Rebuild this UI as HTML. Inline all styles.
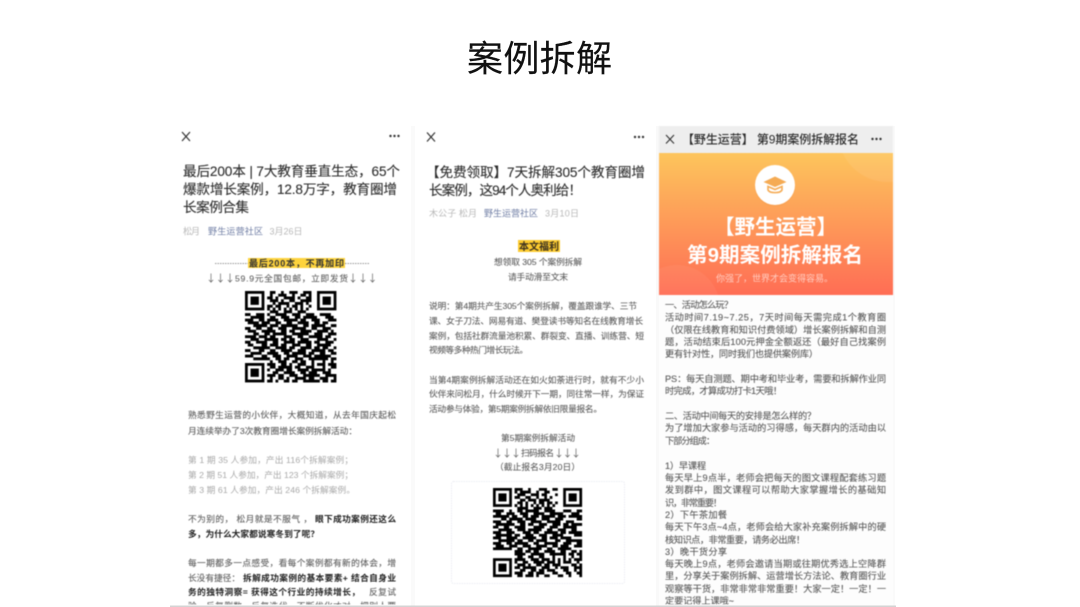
<!DOCTYPE html>
<html lang="zh"><head><meta charset="utf-8"><title>案例拆解</title>
<style>
html,body{margin:0;padding:0;width:1080px;height:607px;overflow:hidden;background:#fff}
svg{display:block}
text{font-family:"Liberation Sans","Noto Sans CJK SC",sans-serif;white-space:pre}
.b{filter:blur(.45px)}
.t{font-size:13.6px;fill:#2e2e2e;stroke:#2e2e2e;stroke-width:.12px}
.m{font-size:9px;fill:#b8b8b8}
.l{font-size:9px;fill:#6f7da4}
.p{font-size:8.7px;fill:#5e5e5e;stroke:#5e5e5e;stroke-width:.1px}
.g{font-size:8.7px;fill:#a8a8a8}
.s{font-size:8.7px;fill:#222;font-weight:700}
.c{font-size:9.2px;fill:#585858;stroke:#585858;stroke-width:.1px}
.a{font-family:"Noto Sans CJK SC",sans-serif;font-size:10px;fill:#666}
</style></head><body>
<svg width="1080" height="607" viewBox="0 0 1080 607" xmlns="http://www.w3.org/2000/svg">
<defs>
<linearGradient id="o" x1="0" y1="0" x2="0" y2="1"><stop offset="0" stop-color="#fdc55c"/><stop offset="1" stop-color="#ff6d55"/></linearGradient>
<clipPath id="cp"><rect x="170" y="120" width="730" height="484.500"/></clipPath>
<clipPath id="bn"><rect x="659" y="153" width="234" height="142"/></clipPath>
<g id="f"><rect x=".5" y=".5" width="6" height="6" fill="none" stroke="#000"/><rect x="2" y="2" width="3" height="3" fill="#000"/></g>
</defs>
<rect width="1080" height="607" fill="#fff"/>
<text x="467" y="71" font-size="36" textLength="145" lengthAdjust="spacing" fill="#111" stroke="#111" stroke-width=".15">案例拆解</text>

<rect x="411" y="126" width="4" height="480" fill="#fafafa"/>
<rect x="656" y="126" width="3" height="480" fill="#f9f9f9"/>
<rect x="893" y="126" width="2" height="480" fill="#fafafa"/>
<rect x="659" y="295" width="234" height="311" fill="#fdfdfd"/>
<rect x="170" y="605.500" width="726" height="1.500" fill="#d4d4d4"/>

<g class="b" clip-path="url(#cp)">
<!-- Panel 1 -->
<path d="M182 132l8 9M190 132l-8 9" stroke="#333" stroke-width="1.2" fill="none"/>
<g fill="#333"><circle cx="390.5" cy="136" r="1.2"/><circle cx="394.5" cy="136" r="1.2"/><circle cx="398.5" cy="136" r="1.2"/></g>
<text class="t" x="183" y="176" textLength="217" lengthAdjust="spacing">最后200本 | 7大教育垂直生态，65个</text>
<text class="t" x="183" y="194" textLength="214" lengthAdjust="spacing">爆款增长案例，12.8万字，教育圈增</text>
<text class="t" x="183" y="212" textLength="66" lengthAdjust="spacing">长案例合集</text>
<text class="m" x="183" y="234.500" textLength="17" lengthAdjust="spacing">松月</text>
<text class="l" x="208" y="234.500" textLength="55" lengthAdjust="spacing">野生运营社区</text>
<text class="m" x="269.500" y="234.500" textLength="33" lengthAdjust="spacing">3月26日</text>
<path d="M215 263.500h33M345 263.500h24" stroke="#777" stroke-width=".7" stroke-dasharray="1.500 1"/>
<rect x="248" y="258" width="97" height="10" fill="#fdd33d"/>
<text x="249" y="266.500" font-size="9" font-weight="700" fill="#333" textLength="95" lengthAdjust="spacing">最后200本，不再加印</text>
<text class="a" x="206" y="282">↓</text><text class="a" x="215.500" y="282">↓</text><text class="a" x="225" y="282">↓</text>
<text class="p" x="235" y="281.500" textLength="113" lengthAdjust="spacing">59.9元全国包邮，立即发货</text>
<text class="a" x="348" y="282">↓</text><text class="a" x="358" y="282">↓</text><text class="a" x="367.500" y="282">↓</text>

<g transform="translate(245 291) scale(2.77)">
<use href="#f"/><use href="#f" x="26"/><use href="#f" y="26"/>
<path fill="none" stroke="#000" stroke-width="1.04" d="M9 .5h2M13 .5h1M16 .5h3M21 .5h3M9 1.500h1M12 1.500h3M17 1.500h1M20 1.500h2M23 1.500h1M8 2.500h2M11 2.500h1M14 2.500h4M19 2.500h1M22 2.500h2M9 3.500h3M13 3.500h1M16 3.500h2M20 3.500h4M10 4.500h1M12 4.500h4M18 4.500h3M22 4.500h1M8 5.500h2M11 5.500h2M15 5.500h1M17 5.500h2M20 5.500h1M23 5.500h1M8 6.500h1M10 6.500h1M12 6.500h1M14 6.500h1M16 6.500h1M18 6.500h1M20 6.500h1M22 6.500h1M9 7.500h3M14 7.500h3M19 7.500h3M0 8.500h2M4 8.500h3M8 8.500h1M11 8.500h4M17 8.500h3M22 8.500h3M27 8.500h4M2 9.500h5M9 9.500h2M13 9.500h3M18 9.500h2M21 9.500h5M29 9.500h3M0 10.500h3M5 10.500h2M8 10.500h4M14 10.500h5M20 10.500h2M24 10.500h3M30 10.500h3M1 11.500h4M6 11.500h3M11 11.500h2M15 11.500h2M19 11.500h4M25 11.500h2M28 11.500h2M3 12.500h5M9 12.500h3M13 12.500h6M21 12.500h2M24 12.500h5M31 12.500h2M0 13.500h2M4 13.500h2M8 13.500h2M12 13.500h3M17 13.500h5M24 13.500h2M28 13.500h3M1 14.500h3M6 14.500h5M13 14.500h2M16 14.500h2M20 14.500h4M26 14.500h4M31 14.500h1M3 15.500h2M7 15.500h2M10 15.500h5M17 15.500h6M25 15.500h3M30 15.500h3M0 16.500h4M5 16.500h3M9 16.500h2M14 16.500h3M19 16.500h2M23 16.500h5M29 16.500h2M2 17.500h3M7 17.500h5M13 17.500h2M16 17.500h2M20 17.500h3M26 17.500h4M32 17.500h1M0 18.500h2M4 18.500h4M10 18.500h2M14 18.500h4M19 18.500h5M25 18.500h2M29 18.500h3M1 19.500h2M6 19.500h2M9 19.500h3M13 19.500h2M17 19.500h3M22 19.500h2M26 19.500h5M3 20.500h6M11 20.500h4M16 20.500h2M20 20.500h4M25 20.500h2M28 20.500h2M32 20.500h1M0 21.500h2M5 21.500h2M9 21.500h2M13 21.500h4M19 21.500h3M24 21.500h5M30 21.500h2M2 22.500h4M8 22.500h4M14 22.500h2M17 22.500h5M23 22.500h2M27 22.500h2M31 22.500h2M0 23.500h3M6 23.500h2M10 23.500h3M15 23.500h4M21 23.500h3M25 23.500h6M3 24.500h6M11 24.500h2M14 24.500h2M18 24.500h3M23 24.500h7M31 24.500h2M9 25.500h1M12 25.500h3M17 25.500h2M20 25.500h2M24 25.500h1M28 25.500h1M31 25.500h1M8 26.500h3M13 26.500h2M16 26.500h1M19 26.500h3M24 26.500h1M26 26.500h3M30 26.500h3M9 27.500h2M12 27.500h5M18 27.500h2M22 27.500h3M28 27.500h1M31 27.500h2M8 28.500h1M11 28.500h3M15 28.500h2M19 28.500h4M24 28.500h5M30 28.500h1M10 29.500h2M14 29.500h4M20 29.500h2M23 29.500h3M28 29.500h3M8 30.500h3M12 30.500h2M16 30.500h3M21 30.500h6M29 30.500h4M9 31.500h1M12 31.500h2M15 31.500h1M18 31.500h4M23 31.500h2M27 31.500h3M32 31.500h1M8 32.500h2M11 32.500h1M14 32.500h2M17 32.500h2M21 32.500h6M28 32.500h2M31 32.500h2"/>
</g>

<text class="p" x="188" y="418" textLength="208" lengthAdjust="spacing">熟悉野生运营的小伙伴，大概知道，从去年国庆起松</text>
<text class="p" x="188" y="434" textLength="169" lengthAdjust="spacing">月连续举办了3次教育圈增长案例拆解活动：</text>
<text class="g" x="188" y="463" textLength="165" lengthAdjust="spacing">第 1 期 35 人参加，产出 116个拆解案例；</text>
<text class="g" x="188" y="478" textLength="165" lengthAdjust="spacing">第 2 期 51 人参加，产出 123 个拆解案例；</text>
<text class="g" x="188" y="493" textLength="167" lengthAdjust="spacing">第 3 期 61 人参加，产出 246 个拆解案例。</text>
<text class="p" x="188" y="522" textLength="124" lengthAdjust="spacing">不为别的， 松月就是不服气 ，</text>
<text class="s" x="315" y="522" textLength="81" lengthAdjust="spacing">眼下成功案例还这么</text>
<text class="s" x="188" y="537" textLength="131" lengthAdjust="spacing">多，为什么大家都说寒冬到了呢？</text>
<text class="p" x="188" y="566" textLength="208" lengthAdjust="spacing">每一期都多一点感受，看每个案例都有新的体会，增</text>
<text class="p" x="188" y="581" textLength="52" lengthAdjust="spacing">长没有捷径：</text>
<text class="s" x="243" y="581" textLength="153" lengthAdjust="spacing">拆解成功案例的基本要素+ 结合自身业</text>
<text class="s" x="188" y="595" textLength="172" lengthAdjust="spacing">务的独特洞察= 获得这个行业的持续增长，</text>
<text class="p" x="369" y="595" textLength="27" lengthAdjust="spacing">反复试</text>
<text class="p" x="188" y="609" textLength="208" lengthAdjust="spacing">验、反复删数、反复迭代，不断优化才对，把别人要</text>

<!-- Panel 2 -->
<path d="M427 132.500l8 9M435 132.500l-8 9" stroke="#333" stroke-width="1.2" fill="none"/>
<g fill="#333"><circle cx="635" cy="137" r="1.200"/><circle cx="639" cy="137" r="1.200"/><circle cx="643" cy="137" r="1.200"/></g>
<text class="t" x="426" y="177" textLength="219" lengthAdjust="spacing">【免费领取】7天拆解305个教育圈增</text>
<text class="t" x="429" y="195" textLength="153" lengthAdjust="spacing">长案例，这94个人奥利给！</text>
<text class="m" x="429" y="216.500" textLength="48" lengthAdjust="spacing">木公子 松月</text>
<text class="l" x="484" y="216.500" textLength="54" lengthAdjust="spacing">野生运营社区</text>
<text class="m" x="545" y="216.500" textLength="34" lengthAdjust="spacing">3月10日</text>
<rect x="518" y="240" width="42" height="12" fill="#fdcb2e"/>
<text x="519" y="250" font-size="10" font-weight="700" fill="#3a3020" textLength="40" lengthAdjust="spacing">本文福利</text>
<text class="p" x="494" y="265" textLength="88" lengthAdjust="spacing">想领取 305 个案例拆解</text>
<text class="p" x="508" y="280" textLength="60" lengthAdjust="spacing">请手动滑至文末</text>
<text class="p" x="429" y="309" textLength="208" lengthAdjust="spacing">说明：第4期共产生305个案例拆解，覆盖跟谁学、三节</text>
<text class="p" x="429" y="324" textLength="214" lengthAdjust="spacing">课、女子刀法、网易有道、樊登读书等知名在线教育增长</text>
<text class="p" x="429" y="339" textLength="215" lengthAdjust="spacing">案例，包括社群流量池积累、群裂变、直播、训练营、短</text>
<text class="p" x="429" y="353" textLength="99" lengthAdjust="spacing">视频等多种热门增长玩法。</text>
<text class="p" x="429" y="383" textLength="215" lengthAdjust="spacing">当第4期案例拆解活动还在如火如荼进行时，就有不少小</text>
<text class="p" x="429" y="397" textLength="215" lengthAdjust="spacing">伙伴来问松月，什么时候开下一期，同往常一样，为保证</text>
<text class="p" x="429" y="412" textLength="173" lengthAdjust="spacing">活动参与体验，第5期案例拆解依旧限量报名。</text>
<text class="p" x="501" y="441" textLength="74" lengthAdjust="spacing">第5期案例拆解活动</text>
<text class="a" x="493" y="457">↓</text><text class="a" x="502" y="457">↓</text><text class="a" x="511" y="457">↓</text>
<text class="p" x="521" y="456" textLength="33" lengthAdjust="spacing">扫码报名</text>
<text class="a" x="554" y="457">↓</text><text class="a" x="562.500" y="457">↓</text><text class="a" x="571" y="457">↓</text>
<text class="p" x="495" y="470" textLength="85" lengthAdjust="spacing">（截止报名3月20日）</text>
<rect x="451.500" y="481.500" width="173" height="102" rx="2" fill="none" stroke="#e6e8ef" stroke-width=".8" stroke-dasharray="1.500 1"/>

<g transform="translate(493 488) scale(2.7)">
<use href="#f"/><use href="#f" x="26"/><use href="#f" y="26"/>
<path fill="none" stroke="#000" stroke-width="1.04" d="M8 .5h3M13 .5h1M17 .5h3M22 .5h2M8 1.500h1M10 1.500h4M16 1.500h1M19 1.500h2M9 2.500h3M14 2.500h3M18 2.500h2M23 2.500h1M8 3.500h2M12 3.500h2M16 3.500h1M19 3.500h1M21 3.500h1M10 4.500h2M13 4.500h3M17 4.500h4M9 5.500h2M12 5.500h1M15 5.500h1M17 5.500h2M20 5.500h2M23 5.500h1M8 6.500h1M10 6.500h1M12 6.500h1M14 6.500h1M16 6.500h1M18 6.500h1M20 6.500h1M22 6.500h1M9 7.500h4M15 7.500h3M19 7.500h3M0 8.500h4M6 8.500h1M9 8.500h2M12 8.500h5M19 8.500h4M26 8.500h3M31 8.500h2M1 9.500h2M5 9.500h3M10 9.500h3M15 9.500h4M21 9.500h5M29 9.500h3M0 10.500h6M7 10.500h2M11 10.500h2M14 10.500h3M18 10.500h5M24 10.500h3M28 10.500h5M3 11.500h2M6 11.500h5M12 11.500h4M18 11.500h3M23 11.500h3M31 11.500h2M0 12.500h3M5 12.500h2M9 12.500h3M14 12.500h4M20 12.500h5M27 12.500h3M1 13.500h7M10 13.500h2M13 13.500h2M17 13.500h3M22 13.500h3M26 13.500h2M29 13.500h4M0 14.500h2M4 14.500h2M8 14.500h4M15 14.500h4M21 14.500h3M26 14.500h5M2 15.500h5M9 15.500h3M13 15.500h5M20 15.500h2M24 15.500h3M29 15.500h2M0 16.500h3M5 16.500h3M11 16.500h3M15 16.500h2M19 16.500h5M25 16.500h2M28 16.500h5M1 17.500h6M8 17.500h2M12 17.500h3M17 17.500h3M22 17.500h4M30 17.500h3M0 18.500h3M5 18.500h4M11 18.500h5M18 18.500h2M21 18.500h3M25 18.500h4M2 19.500h6M9 19.500h2M13 19.500h2M16 19.500h4M23 19.500h2M27 19.500h6M0 20.500h3M5 20.500h2M8 20.500h5M15 20.500h2M19 20.500h5M26 20.500h3M31 20.500h2M1 21.500h3M6 21.500h3M11 21.500h3M16 21.500h4M22 21.500h2M25 21.500h3M30 21.500h3M0 22.500h7M9 22.500h2M13 22.500h5M20 22.500h2M24 22.500h5M8 23.500h3M12 23.500h2M15 23.500h2M19 23.500h4M25 23.500h2M29 23.500h2M32 23.500h1M8 24.500h4M14 24.500h5M21 24.500h6M28 24.500h2M31 24.500h2M9 25.500h2M13 25.500h2M17 25.500h2M22 25.500h1M26 25.500h1M29 25.500h1M32 25.500h1M8 26.500h4M14 26.500h3M18 26.500h3M22 26.500h1M24 26.500h1M26 26.500h1M28 26.500h1M30 26.500h3M8 27.500h1M11 27.500h2M15 27.500h4M20 27.500h3M24 27.500h1M26 27.500h3M31 27.500h1M9 28.500h3M13 28.500h1M16 28.500h2M19 28.500h2M22 28.500h3M29 28.500h2M32 28.500h1M8 29.500h2M11 29.500h5M18 29.500h3M23 29.500h1M25 29.500h3M30 29.500h3M10 30.500h2M14 30.500h2M17 30.500h2M20 30.500h3M26 30.500h2M30 30.500h1M32 30.500h1M8 31.500h3M13 31.500h2M16 31.500h3M22 31.500h2M27 31.500h2M31 31.500h2M9 32.500h2M12 32.500h3M16 32.500h1M19 32.500h2M24 32.500h2M28 32.500h1M32 32.500h1"/>
</g>

<!-- Panel 3 -->
<rect x="659" y="126" width="234" height="27" fill="#eeeeee"/>
<path d="M666 135l8 8.500M674 135l-8 8.500" stroke="#333" stroke-width="1.100" fill="none"/>
<text x="682" y="143.500" font-size="12" font-weight="500" fill="#2d2d2d" textLength="177" lengthAdjust="spacing">【野生运营】 第9期案例拆解报名</text>
<g fill="#333"><circle cx="872.500" cy="139" r="1.200"/><circle cx="876.500" cy="139" r="1.200"/><circle cx="880.500" cy="139" r="1.200"/></g>
<rect x="659" y="153" width="234" height="142" fill="url(#o)"/>
<g clip-path="url(#bn)"><circle cx="888" cy="132" r="50" fill="#fff" opacity=".07"/><circle cx="677" cy="308" r="43" fill="#fff" opacity=".05"/></g>
<circle cx="775" cy="186" r="20.500" fill="#e8983f" opacity=".22"/>
<circle cx="775" cy="185" r="20" fill="#fff"/>
<path d="M775 176.500l11.500 5.500-11.500 5-11.500-5z" fill="#f5ab54"/>
<path d="M768 186.500v3.500c1.500 3.500 12.500 3.500 14 0v-3.500l-7 3z" fill="none" stroke="#f5ab54" stroke-width="1.600"/>
<text x="714" y="234" font-size="20.500" font-weight="700" fill="#fff" textLength="123" lengthAdjust="spacing">【野生运营】</text>
<text x="687" y="262" font-size="20.500" font-weight="700" fill="#fff" textLength="176" lengthAdjust="spacing">第9期案例拆解报名</text>
<text x="716" y="281.500" font-size="9" fill="#fff" fill-opacity=".62" textLength="117" lengthAdjust="spacing">你强了，世界才会变得容易。</text>

<text class="c" x="665" y="308" textLength="68" lengthAdjust="spacing">一、活动怎么玩？</text>
<text class="c" x="665" y="320.500" textLength="221" lengthAdjust="spacing">活动时间7.19~7.25，7天时间每天需完成1个教育圈</text>
<text class="c" x="665" y="333" textLength="221" lengthAdjust="spacing">（仅限在线教育和知识付费领域）增长案例拆解和自测</text>
<text class="c" x="665" y="345" textLength="221" lengthAdjust="spacing">题，活动结束后100元押金全额返还（最好自己找案例</text>
<text class="c" x="665" y="357" textLength="153" lengthAdjust="spacing">更有针对性，同时我们也提供案例库）</text>
<text class="c" x="665" y="382" textLength="221" lengthAdjust="spacing">PS：每天自测题、期中考和毕业考，需要和拆解作业同</text>
<text class="c" x="665" y="394" textLength="117" lengthAdjust="spacing">时完成，才算成功打卡1天哦！</text>
<text class="c" x="665" y="419" textLength="151" lengthAdjust="spacing">二、活动中间每天的安排是怎么样的？</text>
<text class="c" x="665" y="431" textLength="221" lengthAdjust="spacing">为了增加大家参与活动的习得感，每天群内的活动由以</text>
<text class="c" x="665" y="444" textLength="50" lengthAdjust="spacing">下部分组成：</text>
<text class="c" x="665" y="469" textLength="41" lengthAdjust="spacing">1）早课程</text>
<text class="c" x="665" y="481" textLength="221" lengthAdjust="spacing">每天早上9点半，老师会把每天的图文课程配套练习题</text>
<text class="c" x="665" y="493" textLength="221" lengthAdjust="spacing">发到群中，图文课程可以帮助大家掌握增长的基础知</text>
<text class="c" x="665" y="506" textLength="57" lengthAdjust="spacing">识，非常重要！</text>
<text class="c" x="665" y="518" textLength="62" lengthAdjust="spacing">2）下午茶加餐</text>
<text class="c" x="665" y="530" textLength="221" lengthAdjust="spacing">每天下午3点~4点，老师会给大家补充案例拆解中的硬</text>
<text class="c" x="665" y="543" textLength="140" lengthAdjust="spacing">核知识点，非常重要，请务必出席！</text>
<text class="c" x="665" y="555" textLength="62" lengthAdjust="spacing">3）晚干货分享</text>
<text class="c" x="665" y="567" textLength="221" lengthAdjust="spacing">每天晚上9点，老师会邀请当期或往期优秀选上空降群</text>
<text class="c" x="665" y="579" textLength="221" lengthAdjust="spacing">里，分享关于案例拆解、运营增长方法论、教育圈行业</text>
<text class="c" x="665" y="592" textLength="221" lengthAdjust="spacing">观察等干货，非常非常非常重要！大家一定！一定！一</text>
<text class="c" x="665" y="604" textLength="69" lengthAdjust="spacing">定要记得上课哦~</text>
</g>
</svg>
</body></html>
